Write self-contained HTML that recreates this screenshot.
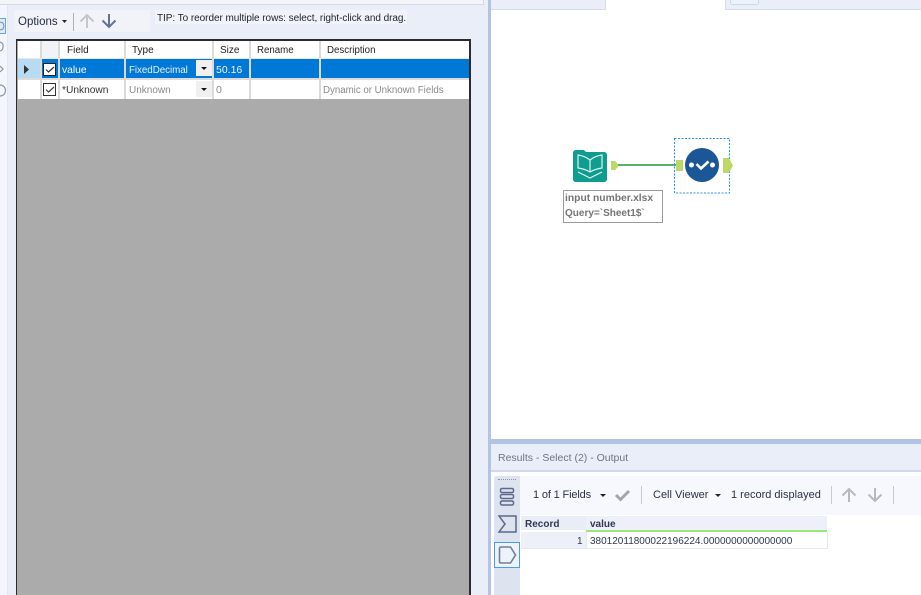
<!DOCTYPE html>
<html><head><meta charset="utf-8">
<style>
html,body{margin:0;padding:0;width:921px;height:595px;overflow:hidden}
body{position:relative;background:#fff;font-family:"Liberation Sans",sans-serif;font-size:10px;color:#2a2f3a}
#w{position:absolute;left:0;top:0;width:921px;height:595px;overflow:hidden}
.a{position:absolute;box-sizing:border-box}
.t{position:absolute;white-space:nowrap;line-height:14px}
svg{position:absolute;overflow:visible}
</style></head><body><div id="w">

<!-- left panel -->
<div class="a" style="left:0;top:0;width:488px;height:595px;background:#e9eef9"></div>
<div class="a" style="left:0;top:0;width:484px;height:5px;background:#f3f5fb;border-bottom:1px solid #d4d9e6;border-right:1px solid #d4d9e6"></div>
<div class="a" style="left:0;top:5px;width:7px;height:590px;background:#f3f6fc"></div>
<div class="a" style="left:7px;top:5px;width:1px;height:590px;background:#e2e7f3"></div>

<!-- left icons clipped -->
<div class="a" style="left:-6px;top:18px;width:12px;height:16px;border:1px solid #6aa5e2;background:#dfe9f8"></div>
<svg style="left:0;top:0" width="8" height="100">
<path d="M0 22l3 1 1 3-1 3-3 1" fill="none" stroke="#7d88a3" stroke-width="1"/>
<path d="M0 42a4 4 0 0 1 3 5 4 4 0 0 1-3 4" fill="none" stroke="#8d95a8" stroke-width="1.200"/>
<path d="M0 66l3 3-3 3" fill="none" stroke="#8d95a8" stroke-width="1.200"/>
<path d="M0 85a5 5 0 0 1 0 11" fill="none" stroke="#8d95a8" stroke-width="1.200"/>
</svg>

<!-- options toolbar -->
<div class="a" style="left:14px;top:10px;width:136px;height:22px;background:#f1f3f8"></div>
<div class="t" style="left:18px;top:15px;font-size:11.500px;color:#1f2a44">Options</div>
<svg style="left:61px;top:19px" width="8" height="5"><path d="M1 1h5l-2.500 3z" fill="#222"/></svg>
<div class="a" style="left:73px;top:13px;width:1px;height:18px;background:#aab0bc"></div>
<svg style="left:79px;top:13px" width="16" height="16"><path d="M8 15V2M1.500 8.500L8 2l6.500 6.500" fill="none" stroke="#c2c6ce" stroke-width="2"/></svg>
<svg style="left:101px;top:13px" width="16" height="16"><path d="M8 1v13M1.500 7.500L8 14l6.500-6.500" fill="none" stroke="#5f7396" stroke-width="2"/></svg>
<div class="a" style="left:155px;top:10px;width:252px;height:14px;background:#f1f3f8"></div>
<div class="t" style="left:157px;top:12px;font-size:10px;letter-spacing:-.05px;color:#1c2230">TIP: To reorder multiple rows: select, right-click and drag.</div>

<!-- grid -->
<div class="a" style="left:16px;top:39px;width:455px;height:570px;border:2px solid #2c2c2e;border-left-width:1.500px;background:#ababab"></div>
<div class="a" style="left:18px;top:41px;width:451px;height:58px;background:#fff"></div>
<div class="a" style="left:40px;top:41px;width:19px;height:17px;background:#f2f3f6"></div>
<div class="a" style="left:18px;top:59px;width:22px;height:20px;background:#b9daf3"></div>
<div class="a" style="left:40px;top:59px;width:429px;height:19px;background:#0078d7"></div>
<div class="a" style="left:18px;top:78px;width:451px;height:2px;background:#dcdcdc"></div>
<div class="a" style="left:40px;top:41px;width:2px;height:58px;background:#dadada"></div>
<div class="a" style="left:58px;top:41px;width:2px;height:58px;background:#dadada"></div>
<div class="a" style="left:124px;top:41px;width:2px;height:58px;background:#dadada"></div>
<div class="a" style="left:212px;top:41px;width:2px;height:58px;background:#dadada"></div>
<div class="a" style="left:249px;top:41px;width:2px;height:58px;background:#dadada"></div>
<div class="a" style="left:319px;top:41px;width:2px;height:58px;background:#dadada"></div>
<div class="a" style="left:18px;top:58px;width:451px;height:1px;background:#e8e8e8"></div>
<div class="t" style="left:67px;top:44px;color:#222">Field</div>
<div class="t" style="left:132px;top:44px;color:#222">Type</div>
<div class="t" style="left:220px;top:44px;color:#222">Size</div>
<div class="t" style="left:257px;top:44px;font-size:9.700px;color:#222">Rename</div>
<div class="t" style="left:327px;top:44px;font-size:9.700px;color:#222">Description</div>
<svg style="left:23px;top:65px" width="7" height="9"><path d="M1 0l5 4.500-5 4.500z" fill="#333"/></svg>

<div class="a" style="left:43px;top:63px;width:13px;height:13px;background:#fff;border:1px solid #222"></div>
<svg style="left:45px;top:65px" width="10" height="9"><path d="M1 4.500l2.500 2.500L9 2" fill="none" stroke="#333" stroke-width="1.200"/></svg>
<div class="a" style="left:43px;top:83px;width:13px;height:13px;background:#fff;border:1px solid #333"></div>
<svg style="left:45px;top:85px" width="10" height="9"><path d="M1 4.500l2.500 2.500L9 2" fill="none" stroke="#444" stroke-width="1.200"/></svg>

<div class="t" style="left:62px;top:64px;font-size:10.300px;color:#fff">value</div>
<div class="t" style="left:129px;top:64px;font-size:9.800px;letter-spacing:-.05px;color:#e6f0fa">FixedDecimal</div>
<div class="a" style="left:196px;top:60px;width:16px;height:16px;background:#f0f0f0"></div>
<svg style="left:201px;top:67px" width="7" height="4"><path d="M0 0h6L3 3z" fill="#111"/></svg>
<div class="t" style="left:216px;top:63px;font-size:10.500px;color:#f2f6fb">50.16</div>

<div class="t" style="left:62px;top:84px;font-size:10.200px;color:#333">*Unknown</div>
<div class="t" style="left:129px;top:84px;color:#8a8a8a">Unknown</div>
<div class="a" style="left:196px;top:81px;width:16px;height:16px;background:#f0f0f0"></div>
<svg style="left:201px;top:88px" width="7" height="4"><path d="M0 0h6L3 3z" fill="#111"/></svg>
<div class="t" style="left:216px;top:83px;font-size:10.500px;color:#8a8a8a">0</div>
<div class="t" style="left:323px;top:84px;font-size:9.700px;color:#8a8a8a">Dynamic or Unknown Fields</div>

<!-- divider -->
<div class="a" style="left:488px;top:0;width:3px;height:595px;background:#b3c3e3"></div>

<!-- top tabs on canvas -->
<div class="a" style="left:491px;top:0;width:115px;height:10px;background:#e9eef9;border-right:1.500px solid #d6dcec;border-bottom:1.500px solid #d6dcec"></div>
<div class="a" style="left:725px;top:0;width:196px;height:10px;background:#e9eef9;border-left:1.500px solid #d6dcec;border-bottom:1.500px solid #d6dcec"></div>
<div class="a" style="left:730px;top:0;width:29px;height:5px;border:1px solid #cfd6e6;border-top:none;border-radius:0 0 3px 3px;background:#edf1fa"></div>

<!-- workflow -->
<svg style="left:0;top:0" width="921" height="595">
<rect x="617" y="164" width="60" height="2" fill="#52b36a"/>
<rect x="674.500" y="138.500" width="55" height="54.500" fill="none" stroke="#2f8fe8" stroke-width="1.100" stroke-dasharray="2 1.500"/>
<path d="M573 153q0-3 3-3h8l2 2h18q3 0 3 3v24q0 3-3 3h-28q-3 0-3-3z" fill="#0f9d8f"/>
<path d="M590 160q-5-4-12-5v13q7 1 12 4q5-3 12-4v-13q-7 1-12 5zM590 160v12" fill="none" stroke="#dff5f1" stroke-width="1.200"/>
<path d="M578 172l12 6 12-6" fill="none" stroke="#dff5f1" stroke-width="1.200"/>
<path d="M611 161h4l3 3v3l-3 3h-4z" fill="#bcd968"/>
<rect x="676" y="160" width="7" height="11" fill="#bcd968"/>
<circle cx="702" cy="165" r="17" fill="#1b5797"/>
<circle cx="691.500" cy="165" r="2.500" fill="#fff"/>
<circle cx="712.500" cy="165" r="2.500" fill="#fff"/>
<path d="M696.500 164l4.500 4.500 7.500-7" fill="none" stroke="#fff" stroke-width="2.600"/>
<path d="M723 158h6l4 7.500-4 7.500h-6z" fill="#bcd968"/>
</svg>
<div class="a" style="left:563px;top:190px;width:100px;height:33px;background:#fff;border:1px solid #9a9a9a"></div>
<div class="t" style="left:565px;top:192px;font-weight:bold;color:#757575;font-size:10.300px">input number.xlsx</div>
<div class="t" style="left:565px;top:207px;font-weight:bold;color:#757575;font-size:10px">Query=`Sheet1$`</div>

<!-- results -->
<div class="a" style="left:491px;top:439px;width:430px;height:5px;background:#b3c3e3"></div>
<div class="a" style="left:491px;top:444px;width:430px;height:28px;background:#e9eef9;border-bottom:2px solid #d2d8e6"></div>
<div class="t" style="left:498px;top:451px;color:#6e7482;font-size:10.500px">Results - Select (2) - Output</div>
<div class="a" style="left:494px;top:476px;width:427px;height:39px;background:#f6f8fd"></div>
<div class="a" style="left:494px;top:476px;width:26px;height:119px;background:#dde3ef;border-radius:3px 0 0 0"></div>
<div class="a" style="left:498px;top:479px;width:18px;height:0;border-top:1px dotted #8a93a8"></div>

<svg style="left:494px;top:480px" width="28" height="90">
<g fill="none" stroke="#5d6a8a" stroke-width="1.500"><rect x="6.500" y="8.500" width="13" height="4" rx="1.500"/><rect x="6.500" y="14.500" width="13" height="4" rx="1.500"/><rect x="6.500" y="21" width="13" height="4" rx="1.500"/>
<path d="M5 36h17v16H5l6-8z"/></g>
</svg>
<div class="a" style="left:494px;top:542px;width:26px;height:26px;background:#eef2fa;border:1.500px solid #4a9de8"></div>
<svg style="left:497px;top:545px" width="20" height="20"><path d="M2.500 3.500q0-1.500 1.500-1.500h9.500l5 8-5 8H4q-1.500 0-1.500-1.500z" fill="none" stroke="#747e98" stroke-width="1.600"/></svg>

<div class="t" style="left:533px;top:488px;font-size:11px;letter-spacing:-.15px;color:#2a3246">1 of 1 Fields</div>
<svg style="left:600px;top:494px" width="7" height="4"><path d="M0 0h6L3 3z" fill="#222"/></svg>
<svg style="left:614px;top:488px" width="18" height="14"><path d="M2 7l4.500 4.500L15 3" fill="none" stroke="#a3a6ad" stroke-width="3"/></svg>
<div class="a" style="left:641px;top:486px;width:1px;height:18px;background:#c6c9d0"></div>
<div class="t" style="left:653px;top:488px;font-size:11px;color:#2a3246">Cell Viewer</div>
<svg style="left:715px;top:494px" width="7" height="4"><path d="M0 0h6L3 3z" fill="#222"/></svg>
<div class="t" style="left:731px;top:488px;font-size:11px;color:#2a3246">1 record displayed</div>
<div class="a" style="left:831px;top:486px;width:1px;height:18px;background:#c6c9d0"></div>
<svg style="left:841px;top:487px" width="16" height="16"><path d="M8 15V2M1.500 8.500L8 2l6.500 6.500" fill="none" stroke="#b6b9c0" stroke-width="2"/></svg>
<svg style="left:867px;top:487px" width="16" height="16"><path d="M8 1v13M1.500 7.500L8 14l6.500-6.500" fill="none" stroke="#b6b9c0" stroke-width="2"/></svg>
<div class="a" style="left:893px;top:486px;width:1px;height:18px;background:#c6c9d0"></div>

<!-- result table -->
<div class="a" style="left:521px;top:516px;width:306px;height:14px;background:#e9edf6"></div>
<div class="a" style="left:586px;top:516px;width:241px;height:14px;background:#edf0f8"></div>
<div class="a" style="left:586px;top:530px;width:241px;height:2px;background:#9be87a"></div>
<div class="a" style="left:521px;top:532px;width:65px;height:16px;background:#edf0f8"></div>
<div class="a" style="left:586px;top:532px;width:242px;height:17px;background:#fff;border:1px solid #e3e8f3;border-top:none"></div>
<div class="a" style="left:521px;top:548px;width:307px;height:1px;background:#e3e8f3"></div>
<div class="t" style="left:525px;top:518px;font-weight:bold;color:#2f3850">Record</div>
<div class="t" style="left:590px;top:518px;font-weight:bold;color:#2f3850">value</div>
<div class="t" style="left:577px;top:535px;color:#2f3850">1</div>
<div class="t" style="left:590px;top:535px;color:#2f3850">38012011800022196224.0000000000000000</div>

</div></body></html>
